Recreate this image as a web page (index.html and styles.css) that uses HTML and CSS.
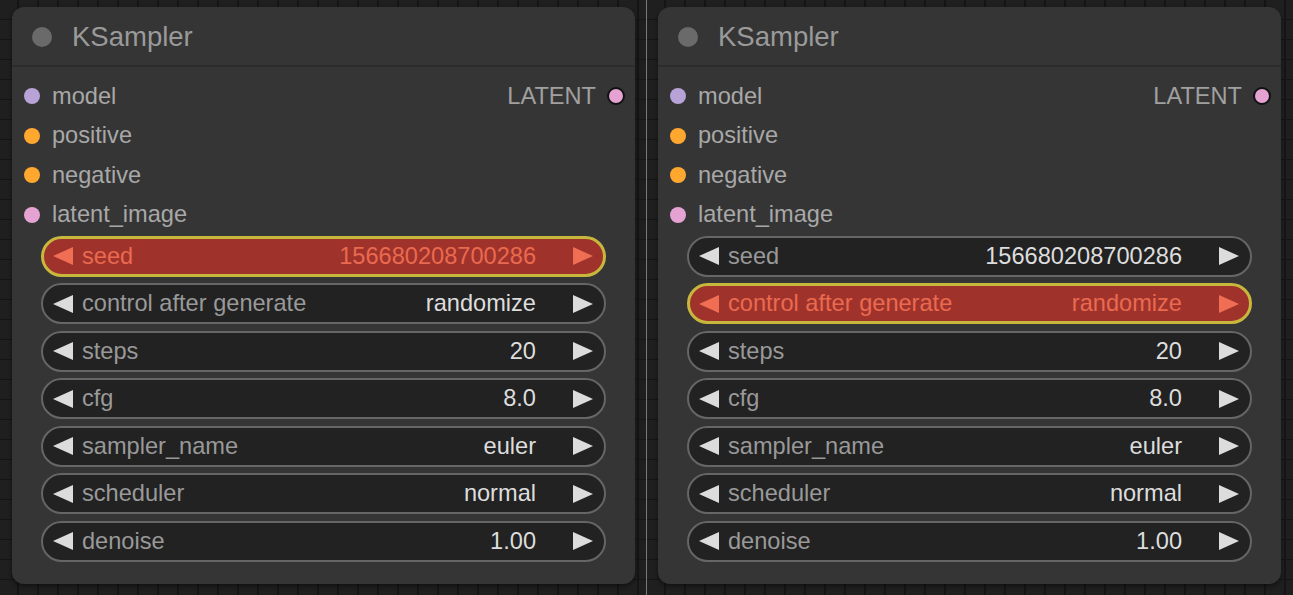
FILE: index.html
```html
<!DOCTYPE html>
<html>
<head>
<meta charset="utf-8">
<title>KSampler</title>
<link rel="stylesheet" href="styles.css">
</head>
<body>
  <div class="panel">
    <div class="node">
      <div class="title"><span class="title-dot"></span><span class="title-text">KSampler</span></div>
      <div class="slots">
        <div class="slot"><span class="dot dot-model"></span><span class="slot-name">model</span><span class="out-name">LATENT</span><span class="out-dot"></span></div>
        <div class="slot"><span class="dot dot-cond"></span><span class="slot-name">positive</span></div>
        <div class="slot"><span class="dot dot-cond"></span><span class="slot-name">negative</span></div>
        <div class="slot"><span class="dot dot-latent"></span><span class="slot-name">latent_image</span></div>
      </div>
      <div class="widgets">
        <div class="widget active"><span class="arrow-l"></span><span class="label">seed</span><span class="value">156680208700286</span><span class="arrow-r"></span></div>
        <div class="widget"><span class="arrow-l"></span><span class="label">control after generate</span><span class="value">randomize</span><span class="arrow-r"></span></div>
        <div class="widget"><span class="arrow-l"></span><span class="label">steps</span><span class="value">20</span><span class="arrow-r"></span></div>
        <div class="widget"><span class="arrow-l"></span><span class="label">cfg</span><span class="value">8.0</span><span class="arrow-r"></span></div>
        <div class="widget"><span class="arrow-l"></span><span class="label">sampler_name</span><span class="value">euler</span><span class="arrow-r"></span></div>
        <div class="widget"><span class="arrow-l"></span><span class="label">scheduler</span><span class="value">normal</span><span class="arrow-r"></span></div>
        <div class="widget"><span class="arrow-l"></span><span class="label">denoise</span><span class="value">1.00</span><span class="arrow-r"></span></div>
      </div>
    </div>
  </div>
  <div class="panel panel-right">
    <div class="node">
      <div class="title"><span class="title-dot"></span><span class="title-text">KSampler</span></div>
      <div class="slots">
        <div class="slot"><span class="dot dot-model"></span><span class="slot-name">model</span><span class="out-name">LATENT</span><span class="out-dot"></span></div>
        <div class="slot"><span class="dot dot-cond"></span><span class="slot-name">positive</span></div>
        <div class="slot"><span class="dot dot-cond"></span><span class="slot-name">negative</span></div>
        <div class="slot"><span class="dot dot-latent"></span><span class="slot-name">latent_image</span></div>
      </div>
      <div class="widgets">
        <div class="widget"><span class="arrow-l"></span><span class="label">seed</span><span class="value">156680208700286</span><span class="arrow-r"></span></div>
        <div class="widget active"><span class="arrow-l"></span><span class="label">control after generate</span><span class="value">randomize</span><span class="arrow-r"></span></div>
        <div class="widget"><span class="arrow-l"></span><span class="label">steps</span><span class="value">20</span><span class="arrow-r"></span></div>
        <div class="widget"><span class="arrow-l"></span><span class="label">cfg</span><span class="value">8.0</span><span class="arrow-r"></span></div>
        <div class="widget"><span class="arrow-l"></span><span class="label">sampler_name</span><span class="value">euler</span><span class="arrow-r"></span></div>
        <div class="widget"><span class="arrow-l"></span><span class="label">scheduler</span><span class="value">normal</span><span class="arrow-r"></span></div>
        <div class="widget"><span class="arrow-l"></span><span class="label">denoise</span><span class="value">1.00</span><span class="arrow-r"></span></div>
      </div>
    </div>
  </div>
</body>
</html>
```

FILE: styles.css
```css
html, body {
  margin: 0;
  padding: 0;
}
body {
  display: flex;
  width: 1293px;
  height: 595px;
  overflow: hidden;
  background: #1f1f1f;
  font-family: "Liberation Sans", Arial, sans-serif;
}
.panel {
  width: 646px;
  height: 595px;
  box-sizing: border-box;
  padding: 7px 0 0 12px;
  background-color: #1f1f1f;
  background-image:
    repeating-linear-gradient(to bottom, transparent 0 19px, #151515 19px 21px, transparent 21px 20px),
    repeating-linear-gradient(to right, transparent 0 17px, #151515 17px 19px, transparent 19px 20px);
  background-size: 20px 20px, 20px 20px;
}
.panel-right {
  width: 647px;
  padding-left: 11px;
  border-left: 1px solid #7a7a7a;
}
.node {
  width: 623px;
  height: 577px;
  box-sizing: border-box;
  background: #353535;
  border-radius: 12px;
  box-shadow: 0 2px 4px rgba(0, 0, 0, 0.45);
  display: flex;
  flex-direction: column;
}
.title {
  height: 60px;
  border-bottom: 2px solid #2c2c2c;
  display: flex;
  align-items: center;
  padding-left: 20px;
  box-sizing: border-box;
  padding-top: 1px;
}
.title-dot {
  width: 20px;
  height: 20px;
  border-radius: 50%;
  background: #6a6a6a;
  flex: none;
}
.title-text {
  margin-left: 20px;
  font-size: 27.5px;
  color: #9a9a9a;
}
.slots {
  padding-top: 9.5px;
  display: flex;
  flex-direction: column;
}
.slot {
  height: 39.5px;
  display: flex;
  align-items: center;
  padding-left: 12px;
  padding-right: 10px;
  font-size: 23.6px;
  color: #a8a8a8;
}
.dot {
  width: 16px;
  height: 16px;
  border-radius: 50%;
  flex: none;
}
.dot-model { background: #b7a3d8; }
.dot-cond { background: #ffa72f; }
.dot-latent { background: #e4a3d3; }
.slot-name {
  margin-left: 12px;
  flex: 1;
}
.out-name {
  color: #a0a0a0;
}
.out-dot {
  width: 14px;
  height: 14px;
  border-radius: 50%;
  border: 2px solid #111;
  background: #e4a3d3;
  margin-left: 11px;
  flex: none;
}
.widgets {
  display: flex;
  flex-direction: column;
  gap: 6.5px;
  padding: 1px 29px 0 29px;
}
.widget {
  height: 41px;
  box-sizing: border-box;
  border: 2px solid #666;
  border-radius: 21px;
  background: #222;
  display: flex;
  align-items: center;
  padding: 0 11px 0 10px;
  font-size: 23.6px;
  color: #999;
}
.arrow-l {
  width: 0;
  height: 0;
  border-top: 9px solid transparent;
  border-bottom: 9px solid transparent;
  border-right: 20px solid #dcdcdc;
  flex: none;
}
.arrow-r {
  width: 0;
  height: 0;
  border-top: 9px solid transparent;
  border-bottom: 9px solid transparent;
  border-left: 20px solid #dcdcdc;
  flex: none;
}
.label {
  margin-left: 9px;
  flex: 1;
  white-space: nowrap;
}
.value {
  margin-right: 37px;
  color: #dddddd;
  white-space: nowrap;
}
.widget.active {
  background: #9f332b;
  border: 3px solid #c8b73d;
  padding: 0 10px 0 9px;
  color: #ea6a50;
}
.widget.active .value {
  color: #ea6a50;
}
.widget.active .arrow-l {
  border-right-color: #ef6e54;
}
.widget.active .arrow-r {
  border-left-color: #ef6e54;
}
```
